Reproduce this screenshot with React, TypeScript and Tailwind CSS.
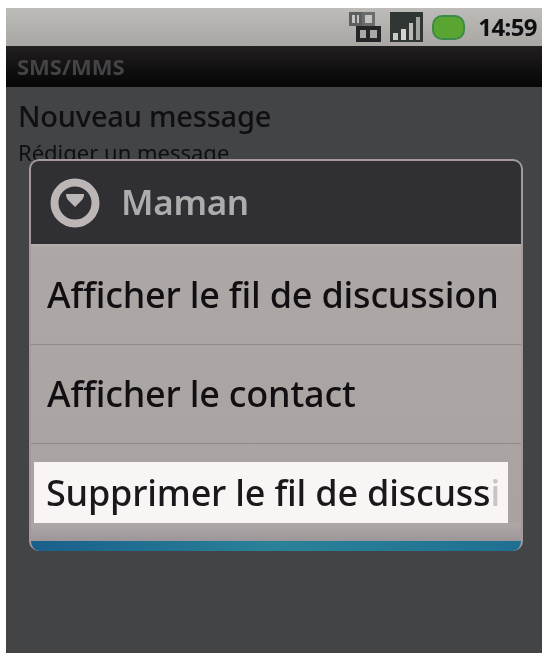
const font = "[font-family:'Noto_Sans','Open_Sans',sans-serif]";

function NetworkIcon() {
  return (
    <svg width="32" height="30" viewBox="0 0 32 30" className="blur-[0.5px]">
      <rect x="0" y="0" width="13" height="14" fill="#5d5e60" />
      <rect x="13" y="0" width="13" height="14" fill="#6b6c6c" />
      <rect x="7" y="14" width="25" height="16" fill="#242528" />
      <path d="M11 18h6v8h-6zM21 18h7v8h-7z" fill="#a8a8a6" />
      <path d="M3 3h3v8H3zM8 3h2v8H8zM16 3h7v8h-7z" fill="#c4c4c2" />
    </svg>
  );
}

function SignalIcon() {
  return (
    <svg width="33" height="30" viewBox="0 0 33 30" className="blur-[0.5px]">
      <rect width="33" height="30" fill="#2f3634" />
      <rect x="3" y="21" width="5" height="7" fill="#c8c8c2" />
      <rect x="11" y="17" width="5" height="11" fill="#d4d4ce" />
      <rect x="19" y="11" width="4" height="17" fill="#bcbcb6" />
      <rect x="26" y="5" width="4" height="23" fill="#a4a4a0" />
    </svg>
  );
}

function MenuRow({ label }: { label: string }) {
  return (
    <div className="h-[99px] shrink-0 flex items-center pl-[16px] border-b border-[#8f8a88] text-[36px] font-medium text-[#120f12] whitespace-nowrap overflow-hidden tracking-[-0.2px]">
      {label}
    </div>
  );
}

export default function App() {
  return (
    <div className={`w-[546px] h-[656px] bg-white pt-2 pl-1.5 pr-1 overflow-hidden ${font}`}>
      <div className="relative h-[645px] flex flex-col blur-[0.7px]">
        {/* Status bar */}
        <div className="h-[38px] shrink-0 bg-gradient-to-b from-[#bdbcb9] to-[#a9a6a3] flex items-center justify-end gap-[9px] pr-[5px]">
          <NetworkIcon />
          <SignalIcon />
          <div className="w-[33px] h-[25px] rounded-[10px] bg-[#5aa531] border-2 border-[#3c8a4c]" />
          <span className="ml-[4px] text-[24px] font-bold text-[#0f0f11] tracking-tight">14:59</span>
        </div>

        {/* App title */}
        <div className="h-[41px] shrink-0 bg-gradient-to-b from-[#221f20] to-[#060606] flex items-center pl-[11px] text-[22px] font-bold text-[#444346]">
          SMS/MMS
        </div>

        {/* List behind the dialog */}
        <div className="flex-1 bg-[#434446] pl-[12px] pt-[9px] text-[#0f0f11]">
          <div className="text-[29px] leading-[40px] font-medium tracking-[-0.2px]">Nouveau message</div>
          <div className="text-[22px] leading-[26px] mt-[3px]">Rédiger un message</div>
        </div>

        {/* Context dialog */}
        <div className="absolute left-[23px] top-[151px] w-[494px] h-[392px] rounded-[10px] overflow-hidden border-t-2 border-x-2 border-[#a5999d] bg-gradient-to-b from-[#aea9a6] to-[#a8a3a1] flex flex-col">
          <div className="h-[85px] shrink-0 bg-[#302f33] border-b-2 border-[#b5adab] flex items-center gap-[20px] pl-[18px]">
            <svg width="52" height="50" viewBox="0 0 52 50">
              <circle cx="26" cy="25" r="20.5" fill="none" stroke="#bcb6b6" strokeWidth="8" />
              <path d="M17 16h18c0 3-1 5-3 7l-6 6-6-6c-2-2-3-4-3-7z" fill="#bcb6b6" />
            </svg>
            <span className="text-[35px] font-semibold text-[#aeabad] tracking-[-0.3px]">Maman</span>
          </div>
          <MenuRow label="Afficher le fil de discussion" />
          <MenuRow label="Afficher le contact" />
          <div className="mt-[18px] ml-[3px] w-[474px] h-[61px] shrink-0 bg-[#f9f5f5] flex items-center pl-[12px] overflow-hidden">
            <span className="text-[36px] font-medium text-[#1c171b] whitespace-nowrap tracking-[-0.2px]">
              Supprimer le fil de discuss<span className="text-[#c8c4c4]">i</span>
            </span>
          </div>
          <div className="flex-1 bg-gradient-to-b from-[#aea9a6] to-[#9c969a]" />
          <div className="h-[10px] shrink-0 bg-gradient-to-r from-[#1a5f8c] via-[#2a8298] to-[#1f6f92]" />
        </div>
      </div>
    </div>
  );
}
